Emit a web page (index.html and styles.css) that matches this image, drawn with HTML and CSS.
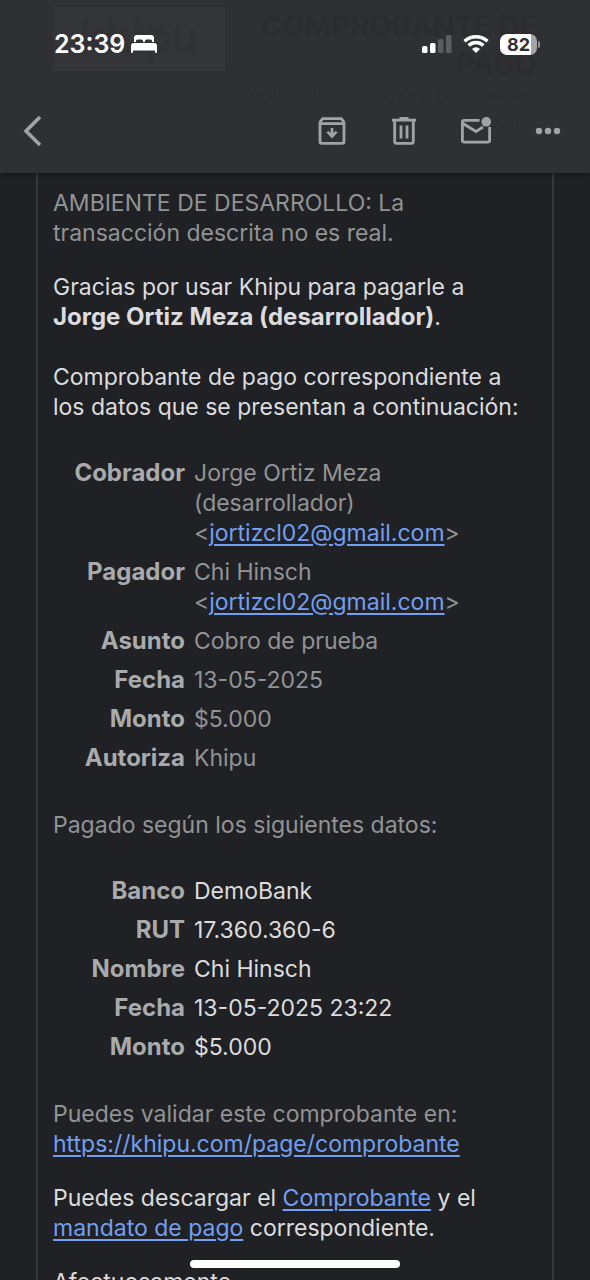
FILE: index.html
```html
<!DOCTYPE html>
<html lang="es">
<head>
<meta charset="utf-8">
<meta name="viewport" content="width=device-width, initial-scale=1">
<title>Comprobante de pago</title>
<link rel="stylesheet" href="styles.css">
</head>
<body>
<header class="topbar">
  <div class="under" aria-hidden="true">
    <div class="under-logo">khipu</div>
    <div class="under-copy">
      <div class="under-title">COMPROBANTE DE<br>PAGO</div>
      <div class="under-code">Código de operación: Eoh*-wpiy-<br>xmrs</div>
    </div>
  </div>
  <div class="status">
    <div class="status-left">
      <span class="time">23:39</span>
      <svg width="26" height="18" viewBox="0 0 26 18" fill="#fff" aria-label="Modo descanso"><path d="M3 7V3Q3 0 6 0H20Q23 0 23 3V7H21V6Q21 4.500 19.500 4.500H15.500Q14 4.500 14 6V7H12V6Q12 4.500 10.500 4.500H6.500Q5 4.500 5 6V7Z"/><path d="M0 17V11Q0 8 3 8H23Q26 8 26 11V17Q26 18 25 18Q24 18 24 17V15.500H2V17Q2 18 1 18Q0 18 0 17Z"/></svg>
    </div>
    <div class="status-right">
      <svg width="30" height="20" viewBox="0 0 30 20" fill="#fff" aria-label="Señal"><rect x="0" y="12" width="5.500" height="7" rx="1.500"/><rect x="8" y="9" width="5.500" height="10" rx="1.500"/><g fill="#5b5c60"><rect x="16" y="5" width="5.500" height="14" rx="1.500"/><rect x="24" y="1" width="5.500" height="18" rx="1.500"/></g></svg>
      <svg width="26" height="20" viewBox="0 0 26 20" fill="none" stroke="#fff" stroke-width="3.400" aria-label="Wi-Fi"><path d="M1.500 7.200Q6.300 2.700 13 2.700T24.500 7.200"/><path d="M5.600 11.500Q8.700 8.500 13 8.500T20.400 11.500"/><path d="M13 19L9 15Q10.700 13.300 13 13.300T17 15Z" fill="#fff" stroke="none"/></svg>
      <div class="battery"><span class="battery-body">82</span><span class="battery-tip"></span></div>
    </div>
  </div>
  <nav class="tools" aria-label="Acciones">
    <button class="tool" aria-label="Volver"><svg width="20" height="32" viewBox="0 0 20 32" fill="none" stroke="#a2a3a6" stroke-width="3.600"><path d="M18 2L4 16L18 30"/></svg></button>
    <div class="tool-group">
      <button class="tool" aria-label="Archivar"><svg width="28" height="28" viewBox="0 0 28 28" fill="none" stroke="#a2a3a6" stroke-width="2.800" stroke-linejoin="round"><path d="M4.500 1.700H23.500L26 5.200V24.500Q26 26.300 24.200 26.300H3.800Q2 26.300 2 24.500V5.200Z"/><path d="M2 6.600H26"/><path d="M14 11V19"/><path d="M8.500 15.500L10.300 14L14 17L17.700 14L19.500 15.500L14 21.500Z" fill="#a2a3a6" stroke="none"/></svg></button>
      <button class="tool" aria-label="Eliminar"><svg width="26" height="28" viewBox="0 0 26 28" fill="none" stroke="#a2a3a6" stroke-width="2.800"><path d="M1 3.200H25M8.500 1.400H17.500"/><path d="M3.700 3.200V24.800Q3.700 26.400 5.300 26.400H20.700Q22.300 26.400 22.300 24.800V3.200"/><path d="M10 8.500V21.500M16 8.500V21.500"/></svg></button>
      <button class="tool" aria-label="Marcar como no leído"><svg width="32" height="28" viewBox="0 0 32 28" fill="none" stroke="#a2a3a6" stroke-width="2.800"><path d="M19.500 3.400H4Q2.400 3.400 2.400 5V23.500Q2.400 25.100 4 25.100H28Q29.600 25.100 29.600 23.500V10"/><path d="M3 6.500L16 14.500L23 10"/><circle cx="26.300" cy="4.800" r="4.800" fill="#a2a3a6" stroke="none"/></svg></button>
      <button class="tool" aria-label="Más opciones"><svg width="26" height="8" viewBox="0 0 26 8" fill="#a2a3a6"><circle cx="4" cy="4" r="3.200"/><circle cx="13" cy="4" r="3.200"/><circle cx="22" cy="4" r="3.200"/></svg></button>
    </div>
  </nav>
</header>
<main class="mail">
  <p class="dim">AMBIENTE DE DESARROLLO: La transacción descrita no es real.</p>
  <p class="greeting">Gracias por usar Khipu para pagarle a<br><strong>Jorge Ortiz Meza (desarrollador)</strong>.</p>
  <p>Comprobante de pago correspondiente a los datos que se presentan a continuación:</p>
  <table class="data dim">
    <tr><th scope="row">Cobrador</th><td>Jorge Ortiz Meza<br>(desarrollador)<br>&lt;<a href="#">jortizcl02@gmail.com</a>&gt;</td></tr>
    <tr><th scope="row">Pagador</th><td>Chi Hinsch<br>&lt;<a href="#">jortizcl02@gmail.com</a>&gt;</td></tr>
    <tr><th scope="row">Asunto</th><td>Cobro de prueba</td></tr>
    <tr><th scope="row">Fecha</th><td>13-05-2025</td></tr>
    <tr><th scope="row">Monto</th><td>$5.000</td></tr>
    <tr><th scope="row">Autoriza</th><td>Khipu</td></tr>
  </table>
  <p class="dim">Pagado según los siguientes datos:</p>
  <table class="data">
    <tr><th scope="row">Banco</th><td>DemoBank</td></tr>
    <tr><th scope="row">RUT</th><td>17.360.360-6</td></tr>
    <tr><th scope="row">Nombre</th><td>Chi Hinsch</td></tr>
    <tr><th scope="row">Fecha</th><td>13-05-2025 23:22</td></tr>
    <tr><th scope="row">Monto</th><td>$5.000</td></tr>
  </table>
  <p class="dim">Puedes validar este comprobante en: <a href="#">https://khipu.com/page/comprobante</a></p>
  <p>Puedes descargar el <a href="#">Comprobante</a> y el <a href="#">mandato de pago</a> correspondiente.</p>
  <p>Afectuosamente,</p>
</main>
<div class="home-indicator"></div>
</body>
</html>
```

FILE: styles.css
```css
* { box-sizing: border-box; }
body {
  margin: 0;
  height: 100vh;
  overflow: hidden;
  display: flex;
  flex-direction: column;
  background: #202124;
  color: #dcdcde;
  font: 400 23px/30px Inter, "Liberation Sans", sans-serif;
}
.topbar {
  position: relative;
  flex: none;
  background: #2f3034;
  box-shadow: 0 1px 4px #101114;
  padding-bottom: 20px;
}
.under {
  position: absolute;
  inset: 0;
  overflow: hidden;
  display: flex;
  justify-content: space-between;
  padding: 7px 53px 0;
}
.under-logo {
  width: 172px;
  height: 64px;
  background: #343538;
  color: #313236;
  font-weight: 700;
  font-size: 44px;
  line-height: 60px;
  text-align: center;
}
.under-copy { text-align: right; white-space: nowrap; color: #2b2c30; }
.under-title { font-weight: 700; font-size: 29px; line-height: 38px; }
.under-code { font-size: 19px; line-height: 26px; color: #2d2e32; }
.status {
  position: relative;
  display: flex;
  justify-content: space-between;
  align-items: center;
  padding: 29px 50px 0 54px;
  color: #fff;
}
.status-left { display: flex; align-items: center; gap: 6px; }
.status-right { display: flex; align-items: center; gap: 11px; }
.time { font-weight: 600; font-size: 25px; }
.battery { display: flex; align-items: center; gap: 1px; }
.battery-body {
  width: 37px;
  height: 21px;
  border-radius: 7px;
  background: linear-gradient(90deg, #fff 83%, #a3a4a6 83%);
  color: #2f3034;
  font-weight: 700;
  font-size: 18px;
  line-height: 21px;
  text-align: center;
}
.battery-tip { width: 2px; height: 7px; border-radius: 0 2px 2px 0; background: #909194; }
.tools {
  position: relative;
  display: flex;
  justify-content: space-between;
  align-items: center;
  padding: 50px 22px 0 12px;
}
.tool-group { display: flex; gap: 32px; }
.tool {
  display: flex;
  justify-content: center;
  align-items: center;
  width: 40px;
  height: 44px;
  padding: 0;
  border: 0;
  background: none;
}
.mail {
  flex: 1;
  min-height: 0;
  margin: 0 36px;
  padding: 15px 15px 0;
  border: solid #38393c;
  border-width: 0 2px;
}
.mail p { margin: 0 0 24px; }
.mail .greeting { margin-bottom: 30px; }
.mail .dim { color: #929395; }
.mail strong, .data th { font-size: 24px; font-weight: 700; }
.mail a { color: #729ff2; text-decoration-thickness: 2px; text-underline-offset: 3px; }
.mail .data { border-collapse: collapse; margin: 36px 0 28px; }
.data th, .data td { padding: 0 0 9px; vertical-align: top; text-align: left; }
.data th { width: 141px; padding-right: 9px; text-align: right; color: #a9aaac; }
.home-indicator {
  position: fixed;
  bottom: 12px;
  left: 50%;
  width: 210px;
  height: 8px;
  margin-left: -105px;
  border-radius: 4px;
  background: #fff;
}
```
